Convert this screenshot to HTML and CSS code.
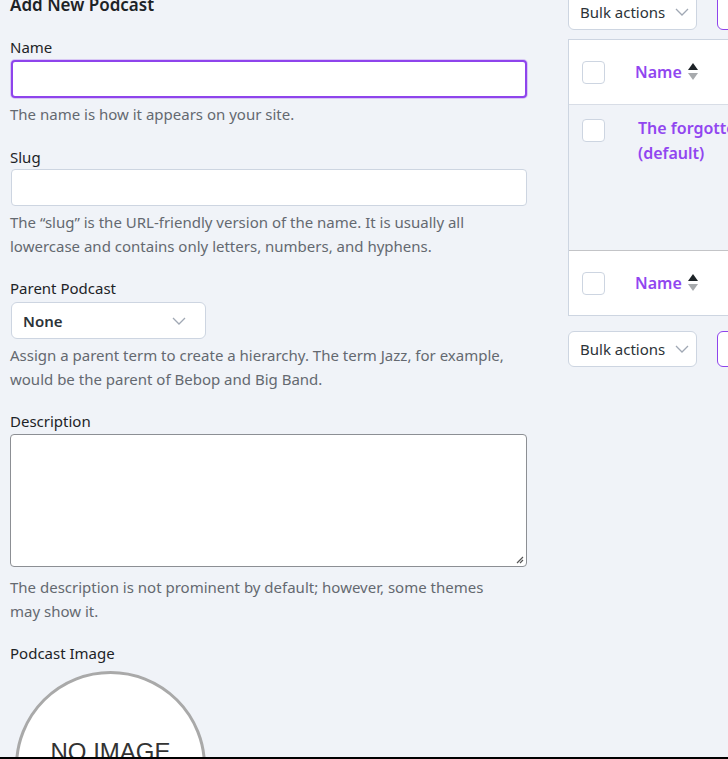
FILE: index.html
```html
<!DOCTYPE html>
<html lang="en">
<head>
<meta charset="utf-8">
<title>Add New Podcast</title>
<link rel="stylesheet" href="styles.css">
</head>
<body>
<div class="page">
  <div class="layout">
    <section class="form-col">
      <h2 class="title">Add New Podcast</h2>

      <div class="field f-name">
        <label class="label">Name</label>
        <div class="input focused"></div>
        <p class="help">The name is how it appears on your site.</p>
      </div>

      <div class="field f-slug">
        <label class="label">Slug</label>
        <div class="input"></div>
        <p class="help">The “slug” is the URL-friendly version of the name. It is usually all lowercase and contains only letters, numbers, and hyphens.</p>
      </div>

      <div class="field f-parent">
        <label class="label">Parent Podcast</label>
        <div class="select select-none">
          <span>None</span>
          <svg class="chev" viewBox="0 0 14 8" width="14" height="8"><path d="M1 1l6 6 6-6" fill="none" stroke="currentColor" stroke-width="1.3"/></svg>
        </div>
        <p class="help">Assign a parent term to create a hierarchy. The term Jazz, for example, would be the parent of Bebop and Big Band.</p>
      </div>

      <div class="field f-desc">
        <label class="label">Description</label>
        <div class="textarea">
          <svg class="grip" viewBox="0 0 8 8" width="8" height="8"><path d="M7 1L1 7M7 4L4 7" fill="none" stroke="#555" stroke-width="1.2"/></svg>
        </div>
        <p class="help">The description is not prominent by default; however, some themes may show it.</p>
      </div>

      <div class="field f-image">
        <label class="label">Podcast Image</label>
        <div class="noimage"><span>NO IMAGE</span></div>
      </div>
    </section>

    <section class="list-col">
      <div class="actions top">
        <div class="select bulk">
          <span>Bulk actions</span>
          <svg class="chev" viewBox="0 0 14 8" width="14" height="8"><path d="M1 1l6 6 6-6" fill="none" stroke="currentColor" stroke-width="1.3"/></svg>
        </div>
        <div class="apply"></div>
      </div>

      <div class="table">
        <div class="row head">
          <span class="cb"></span>
          <span class="col-name">Name
            <svg class="sort" viewBox="0 0 10 20" width="10" height="20"><path d="M5 1L10 8H0z" fill="#1d2327"/><path d="M0 11H10L5 18z" fill="#a7aaad"/></svg>
          </span>
        </div>
        <div class="row body">
          <span class="cb"></span>
          <span class="term">The forgotten podcast<br>(default)</span>
        </div>
        <div class="row foot">
          <span class="cb"></span>
          <span class="col-name">Name
            <svg class="sort" viewBox="0 0 10 20" width="10" height="20"><path d="M5 1L10 8H0z" fill="#1d2327"/><path d="M0 11H10L5 18z" fill="#a7aaad"/></svg>
          </span>
        </div>
      </div>

      <div class="actions bottom">
        <div class="select bulk">
          <span>Bulk actions</span>
          <svg class="chev" viewBox="0 0 14 8" width="14" height="8"><path d="M1 1l6 6 6-6" fill="none" stroke="currentColor" stroke-width="1.3"/></svg>
        </div>
        <div class="apply"></div>
      </div>
    </section>
  </div>
</div>
</body>
</html>
```

FILE: styles.css
```css
html, body {
  margin: 0;
  padding: 0;
  overflow: hidden;
  background: #f0f3f8;
}

body {
  font-family: "Noto Sans", "Open Sans", sans-serif;
  font-size: 15px;
  color: #1d2327;
}

.page {
  height: 757px;
  overflow: hidden;
  border-bottom: 2px solid #000;
}

.layout {
  display: flex;
  gap: 41px;
  margin-top: -7px;
}

.form-col {
  width: 517px;
  padding-left: 10px;
  flex-shrink: 0;
}

.title {
  margin: 1px 0 0;
  font-size: 17px;
  font-weight: 600;
  line-height: 22px;
  color: #1d2327;
}

.label {
  display: block;
  line-height: 24px;
  color: #1d2327;
}

.help {
  margin: 4px 0 0;
  line-height: 24px;
  color: #646970;
  padding-right: 12px;
}

.field { margin-top: 19px; }
.f-slug { margin-top: 19px; }
.f-parent { margin-top: 18px; }
.f-desc { margin-top: 18px; }
.f-image { margin-top: 18px; }

.input {
  box-sizing: border-box;
  height: 38px;
  margin: 1px 0 0 1px;
  background: #fff;
  border: 1px solid #cdd5e1;
  border-radius: 4px;
}

.f-slug .input { margin-top: 0; height: 37px; }

.input.focused {
  border: 2px solid #8e44ec;
  box-shadow: 0 0 0 1px rgba(142, 68, 236, 0.25);
}

.select {
  box-sizing: border-box;
  display: flex;
  align-items: center;
  justify-content: space-between;
  background: #fff;
  border: 1px solid #cdd5e1;
  border-radius: 6px;
  color: #2c3338;
}

.chev { color: #a0a8b4; }

.select-none {
  width: 195px;
  height: 37px;
  margin: 2px 0 0 1px;
  padding: 0 19px 0 11px;
  font-weight: 600;
}

.textarea {
  position: relative;
  box-sizing: border-box;
  height: 133px;
  margin-top: 1px;
  background: #fff;
  border: 1px solid #8c8f94;
  border-radius: 4px;
}

.grip {
  position: absolute;
  right: 2px;
  bottom: 2px;
}

.f-desc .help { margin-top: 8px; }

.noimage {
  box-sizing: border-box;
  width: 191px;
  height: 191px;
  margin: 6px 0 0 5px;
  border: 3px solid #a9a9a9;
  border-radius: 50%;
  background: #fff;
  display: flex;
  justify-content: center;
  padding-top: 64px;
}

.noimage span {
  font-family: "Liberation Sans", Arial, sans-serif;
  font-size: 24px;
  color: #333;
  line-height: 28px;
}

/* right column */
.list-col {
  width: 420px;
  flex-shrink: 0;
}

.actions {
  display: flex;
  gap: 20px;
}

.bulk {
  width: 129px;
  height: 37px;
  padding: 0 7px 0 11px;
}

.top .bulk, .top .apply { height: 37px; }

.apply {
  width: 80px;
  height: 36px;
  box-sizing: border-box;
  border: 1px solid #8e44ec;
  border-radius: 6px;
  background: #fff;
}

.table {
  margin-top: 9px;
  border: 1px solid #cdd5e1;
  border-right: none;
}

.row {
  display: flex;
  align-items: flex-start;
  padding-left: 13px;
}

.head {
  height: 64px;
  background: #fff;
  border-bottom: 1px solid #d8dde6;
  align-items: center;
}

.body {
  padding-top: 14px;
  box-sizing: border-box;
  height: 146px;
  border-bottom: 1px solid #c3c4c7;
}

.foot {
  height: 64px;
  background: #fff;
  align-items: center;
}

.cb {
  box-sizing: border-box;
  width: 23px;
  height: 23px;
  background: #fff;
  border: 1px solid #cdd5e1;
  border-radius: 4px;
  flex-shrink: 0;
}

.col-name {
  display: flex;
  align-items: center;
  gap: 6px;
  margin-left: 30px;
  font-size: 16px;
  font-weight: 600;
  color: #9146f0;
}

.term {
  margin-left: 33px;
  font-size: 16px;
  font-weight: 600;
  line-height: 25px;
  color: #9146f0;
  white-space: nowrap;
  margin-top: -3px;
}

.bottom { margin-top: 15px; }
.bottom .bulk, .bottom .apply { height: 36px; }
```
